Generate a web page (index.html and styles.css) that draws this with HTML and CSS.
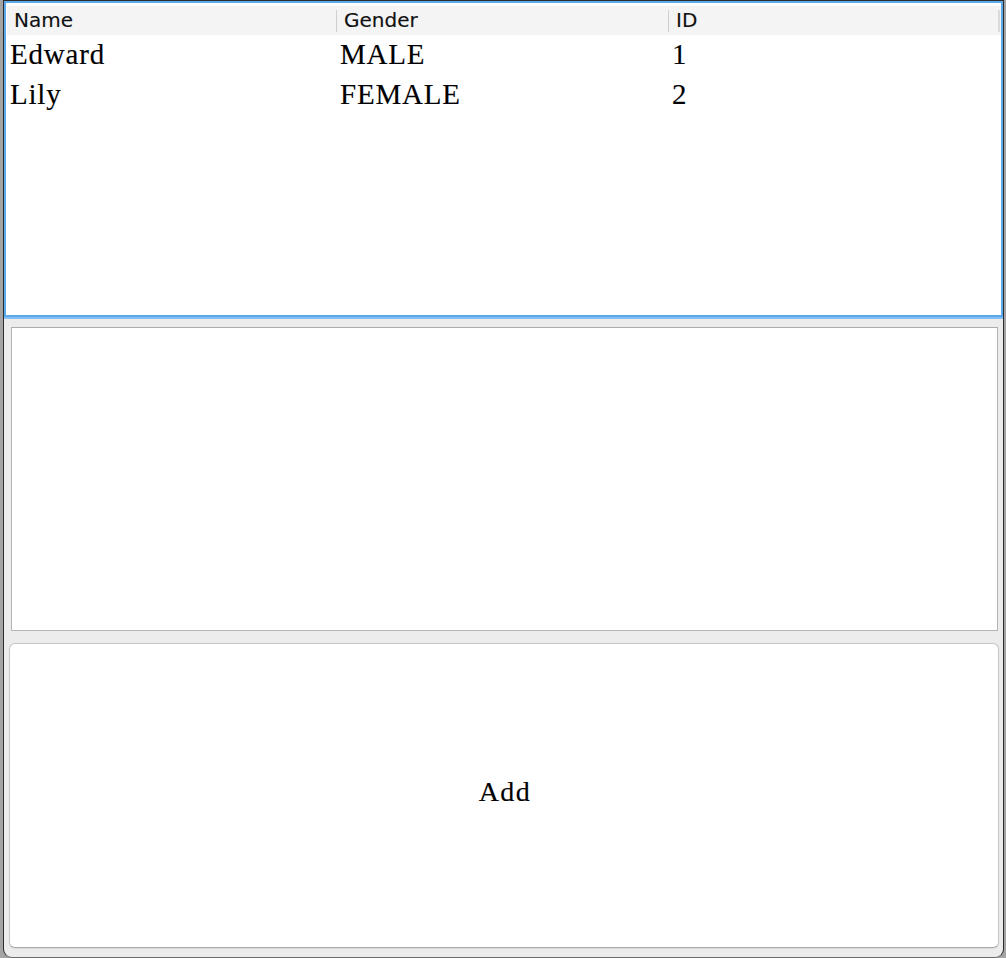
FILE: index.html
```html
<!DOCTYPE html>
<html>
<head>
<meta charset="utf-8">
<link rel="stylesheet" href="styles.css">
</head>
<body>
<div class="window">
  <div class="table-pane">
    <div class="table-head">
      <div class="th">Name</div>
      <div class="th">Gender</div>
      <div class="th">ID</div>
    </div>
    <div class="tr">
      <div class="td">Edward</div>
      <div class="td">MALE</div>
      <div class="td">1</div>
    </div>
    <div class="tr">
      <div class="td">Lily</div>
      <div class="td">FEMALE</div>
      <div class="td">2</div>
    </div>
  </div>
  <div class="text-area"></div>
  <button class="add-btn">Add</button>
</div>
</body>
</html>
```

FILE: styles.css
```css
html, body {
  margin: 0;
  padding: 0;
}
body {
  background: #a4a4a4;
  width: 1006px;
  height: 958px;
  overflow: hidden;
}
.window {
  box-sizing: border-box;
  margin-left: 3px;
  width: 1001px;
  height: 958px;
  border: 1px solid #2c2c2c;
  border-bottom-color: #6a6a6a;
  border-radius: 0 0 9px 9px;
  background: #ececec;
  display: flex;
  flex-direction: column;
}
.table-pane {
  box-sizing: border-box;
  height: 316px;
  border: 2px solid #5ca8ec;
  box-shadow: 0 2px 0 #85bff3;
  background: #ffffff;
  padding: 3px 0 0 1px;
  margin-bottom: 10px;
}
.table-head {
  display: grid;
  grid-template-columns: 330px 332px 331px;
  height: 29px;
  background: #f4f4f4;
}
.th {
  position: relative;
  font-family: "DejaVu Sans", sans-serif;
  font-size: 20px;
  line-height: 28px;
  color: #111;
  padding-left: 7px;
  -webkit-text-stroke: 0.15px #111;
}
.th::after {
  content: "";
  position: absolute;
  right: 0;
  top: 4px;
  bottom: 3px;
  width: 2px;
  background: #dadada;
}
.th:not(:last-child)::after {
  width: 1px;
  background: #cfcfcf;
}
.tr {
  display: grid;
  grid-template-columns: 330px 332px 331px;
  height: 40px;
}
.td {
  font-family: "Liberation Serif", "Times New Roman", serif;
  font-size: 29px;
  letter-spacing: 0.8px;
  line-height: 39px;
  color: #000;
  padding-left: 3px;
  -webkit-text-stroke: 0.15px #000;
}
.text-area {
  box-sizing: border-box;
  height: 304px;
  margin: 0 5px 0 7px;
  background: #ffffff;
  border: 1px solid #b4b4b4;
  border-top-color: #acacac;
}
.add-btn {
  box-sizing: border-box;
  height: 305px;
  margin: 12px 4px 0 5px;
  background: #ffffff;
  border: 1px solid #c6c6c6;
  border-bottom-color: #a9a9a9;
  border-radius: 6px;
  box-shadow: 0 1px 1px rgba(0, 0, 0, 0.08);
  font-family: "Liberation Serif", "Times New Roman", serif;
  font-size: 28px;
  letter-spacing: 1.5px;
  color: #000;
  padding: 0 0 8px 2px;
  -webkit-text-stroke: 0.15px #000;
}
```
